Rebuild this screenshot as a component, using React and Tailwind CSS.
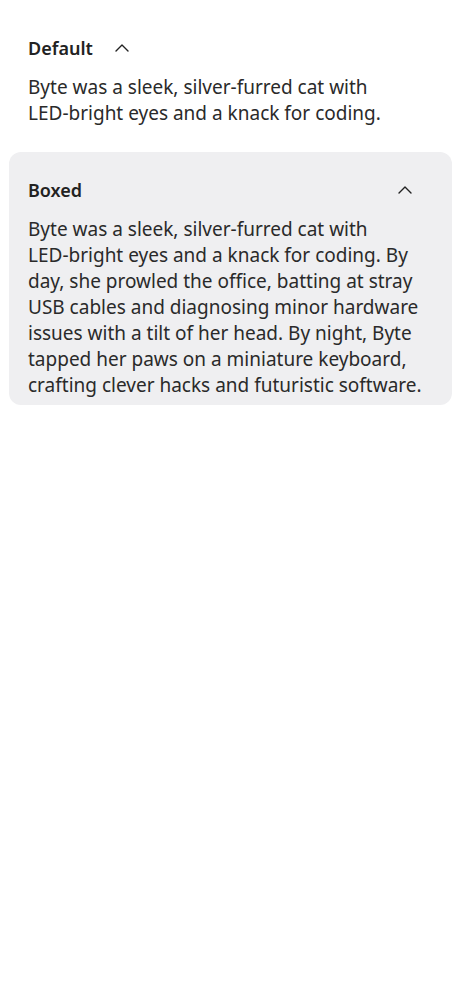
import React from "react";

const Chevron = () => (
  <svg width="14" height="8" viewBox="0 0 14 8" fill="none" stroke="#222" strokeWidth="1.4" strokeLinecap="round" strokeLinejoin="round">
    <path d="M1 7L7 1L13 7" />
  </svg>
);

const NB = ({ children }) => <span className="whitespace-nowrap">{children}</span>;

export default function App() {
  return (
    <div className="min-h-screen bg-white px-[9px] pt-[10px] text-[#222] [font-family:'Noto_Sans',sans-serif]">
      <div className="px-[19px] pt-[26px] pb-[7px]">
        <div className="flex items-center gap-[22px] h-[24px]">
          <span className="text-[18px] leading-[24px] font-semibold">Default</span>
          <Chevron />
        </div>
        <p className="mt-[14px] text-[19px] leading-[26px] text-[#2a2a2a]">
          Byte was a sleek, <NB>silver-furred</NB> cat with <NB>LED-bright</NB> eyes and a knack for coding.
        </p>
      </div>
      <div className="mt-[19px] rounded-[12px] bg-[#efeff1] pl-[19px] pr-[19px] pt-[26px] pb-[7px]">
        <div className="flex items-center justify-between h-[24px]">
          <span className="text-[18px] leading-[24px] font-semibold">Boxed</span>
          <span className="mr-[21px]"><Chevron /></span>
        </div>
        <p className="mt-[14px] text-[19px] leading-[26px] text-[#2a2a2a]">
          Byte was a sleek, <NB>silver-furred</NB> cat with <NB>LED-bright</NB> eyes and a knack for coding. By day, she prowled the office, batting at stray USB cables and diagnosing minor hardware issues with a tilt of her head. By night, Byte tapped her paws on a miniature keyboard, crafting clever hacks and futuristic software.
        </p>
      </div>
    </div>
  );
}
